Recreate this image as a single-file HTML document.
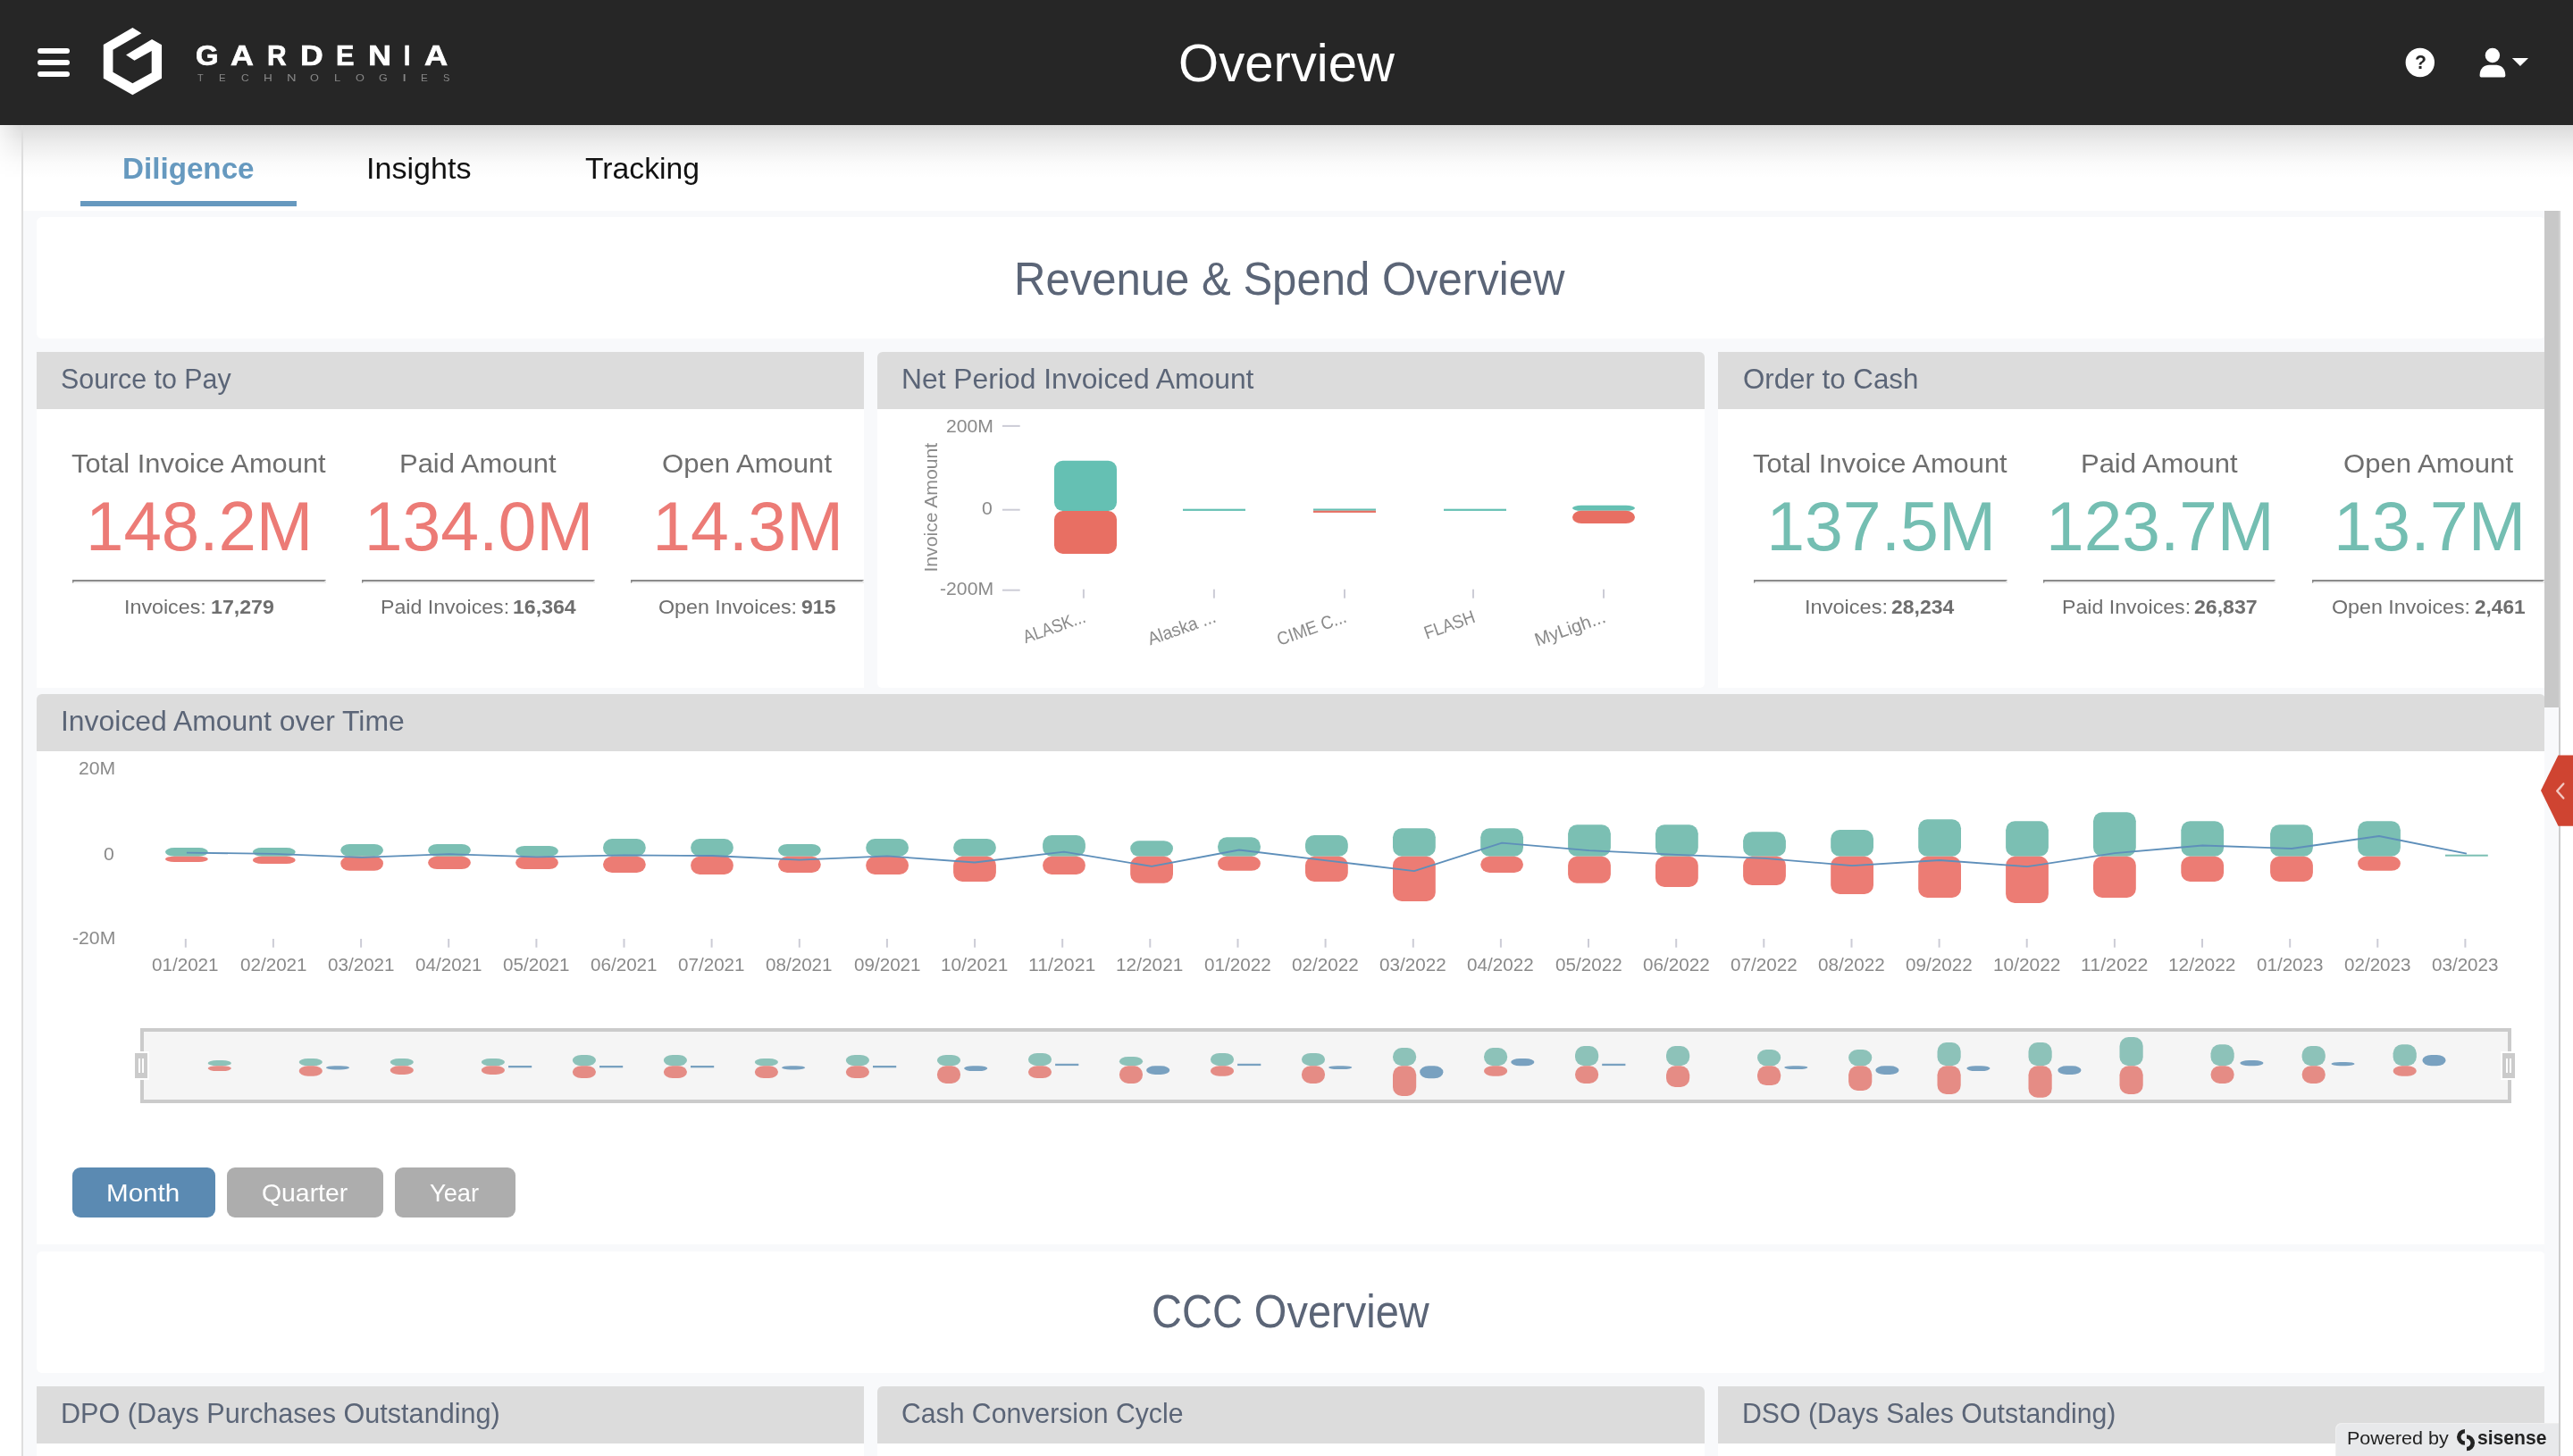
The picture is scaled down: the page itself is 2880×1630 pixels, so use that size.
<!DOCTYPE html>
<html lang="en"><head><meta charset="utf-8"><title>Overview</title>
<style>
html,body{margin:0;padding:0}
body{will-change:transform;width:2880px;height:1630px;position:relative;overflow:hidden;background:#fff;font-family:"Liberation Sans",sans-serif}
.t{position:absolute;white-space:nowrap;line-height:1;transform-origin:0 0;display:block}
.abs{position:absolute}
.bg{position:absolute;left:26px;top:236px;width:2838px;height:1394px;background:#f8f9fb}
.card{position:absolute;background:#fff;border-radius:6px}
.ph{position:absolute;background:#dcdcdc;border-radius:6px 6px 0 0}
.pb{position:absolute;background:#fff;border-radius:0 0 5px 5px}
.hr{position:absolute;box-sizing:border-box;height:4px;border-style:solid;border-width:2px;border-color:#8b8b8b #eee #eee #8b8b8b}
.btn{position:absolute;border-radius:9px;height:56px;top:1307px}
svg{position:absolute;left:0;top:0;overflow:visible}
</style></head><body>

<div class="bg"></div>
<div class="abs" style="left:0;top:140px;width:2880px;height:96px;background:#fff"></div>
<div class="abs" style="left:26px;top:140px;width:2854px;height:60px;background:linear-gradient(to bottom,rgba(0,0,0,.145),rgba(0,0,0,.07) 35%,rgba(0,0,0,.02) 70%,rgba(0,0,0,0))"></div>
<div class="abs" style="left:0;top:140px;width:24px;height:60px;background:linear-gradient(to bottom,rgba(0,0,0,.145),rgba(0,0,0,.07) 35%,rgba(0,0,0,.02) 70%,rgba(0,0,0,0));-webkit-mask-image:linear-gradient(to right,rgba(0,0,0,.35),#000);mask-image:linear-gradient(to right,rgba(0,0,0,.35),#000)"></div>
<div class="abs" style="left:24px;top:140px;width:2px;height:1490px;background:#dedede"></div>
<div class="abs" style="left:0;top:0;width:2880px;height:140px;background:#262626"></div>
<div class="abs" style="left:42px;top:54px;width:36px;height:6px;border-radius:3px;background:#fff"></div>
<div class="abs" style="left:42px;top:67px;width:36px;height:6px;border-radius:3px;background:#fff"></div>
<div class="abs" style="left:42px;top:80px;width:36px;height:6px;border-radius:3px;background:#fff"></div>
<svg width="2880" height="140" viewBox="0 0 2880 140"><path fill="#fff" d="M148.42 30.99L158.38 37.17L126.44 55.71L126.44 80.78L148.42 93.15L169.71 81.47L169.71 57.09L150.48 67.73L141.07 61.55L170.05 44.04L181.04 50.22L181.04 87.65L148.42 106.2L115.8 87.65L115.8 49.88Z"/>
<circle cx="2708.8" cy="70" r="16.2" fill="#fff"/>
<circle cx="2789.9" cy="62" r="8.2" fill="#fff"/>
<path fill="#fff" d="M2777.2 86.4 Q2775.6 86.4 2775.6 84.8 L2775.6 84 C2775.6 76.5 2781 72.7 2786 72.7 L2794 72.7 C2799 72.7 2804.3 76.5 2804.3 84 L2804.3 84.8 Q2804.3 86.4 2802.7 86.4 Z"/>
<path fill="#fff" d="M2811.9 65 L2830 65 L2820.95 74.1 Z"/>
</svg>
<span class="t" style="left:2702.65px;top:58.97px;font-size:22px;color:#262626;font-weight:bold;transform:scaleX(0.9626);">?</span>
<span class="t" style="-webkit-text-stroke:0.7px #fff;left:218.68px;top:46.24px;font-size:32.2px;color:#fff;font-weight:bold;transform:scaleX(1.0214);">G</span>
<span class="t" style="-webkit-text-stroke:0.7px #fff;left:257.90px;top:46.24px;font-size:32.2px;color:#fff;font-weight:bold;transform:scaleX(1.1125);">A</span>
<span class="t" style="-webkit-text-stroke:0.7px #fff;left:298.86px;top:46.24px;font-size:32.2px;color:#fff;font-weight:bold;transform:scaleX(0.9292);">R</span>
<span class="t" style="-webkit-text-stroke:0.7px #fff;left:336.39px;top:46.24px;font-size:32.2px;color:#fff;font-weight:bold;transform:scaleX(1.1059);">D</span>
<span class="t" style="-webkit-text-stroke:0.7px #fff;left:375.71px;top:46.24px;font-size:32.2px;color:#fff;font-weight:bold;transform:scaleX(0.9509);">E</span>
<span class="t" style="-webkit-text-stroke:0.7px #fff;left:411.55px;top:46.24px;font-size:32.2px;color:#fff;font-weight:bold;transform:scaleX(1.1212);">N</span>
<span class="t" style="-webkit-text-stroke:0.7px #fff;left:452.40px;top:46.24px;font-size:32.2px;color:#fff;font-weight:bold;transform:scaleX(0.8139);">I</span>
<span class="t" style="-webkit-text-stroke:0.7px #fff;left:475.29px;top:46.24px;font-size:32.2px;color:#fff;font-weight:bold;transform:scaleX(1.1264);">A</span>
<span class="t" style="left:221.08px;top:81.62px;font-size:11.2px;color:#878787;transform:scaleX(0.9712);">T</span>
<span class="t" style="left:245.49px;top:81.62px;font-size:11.2px;color:#878787;transform:scaleX(1.0157);">E</span>
<span class="t" style="left:270.00px;top:81.62px;font-size:11.2px;color:#878787;transform:scaleX(1.0686);">C</span>
<span class="t" style="left:295.21px;top:81.62px;font-size:11.2px;color:#878787;transform:scaleX(1.2117);">H</span>
<span class="t" style="left:320.73px;top:81.62px;font-size:11.2px;color:#878787;transform:scaleX(1.3074);">N</span>
<span class="t" style="left:347.03px;top:81.62px;font-size:11.2px;color:#878787;transform:scaleX(1.1340);">O</span>
<span class="t" style="left:373.96px;top:81.62px;font-size:11.2px;color:#878787;transform:scaleX(1.1637);">L</span>
<span class="t" style="left:398.33px;top:81.62px;font-size:11.2px;color:#878787;transform:scaleX(1.1340);">O</span>
<span class="t" style="left:424.47px;top:81.62px;font-size:11.2px;color:#878787;transform:scaleX(1.1178);">G</span>
<span class="t" style="left:450.19px;top:81.62px;font-size:11.2px;color:#878787;transform:scaleX(1.6917);">I</span>
<span class="t" style="left:470.86px;top:81.62px;font-size:11.2px;color:#878787;transform:scaleX(1.0485);">E</span>
<span class="t" style="left:496.30px;top:81.62px;font-size:11.2px;color:#878787;transform:scaleX(0.9938);">S</span>
<span class="t" style="left:1318.99px;top:40.94px;font-size:59.6px;color:#fff;transform:scaleX(0.9738);">Overview</span>
<span class="t" style="left:136.84px;top:172.80px;font-size:32.6px;color:#6699bf;font-weight:bold;transform:scaleX(1.0187);">Diligence</span>
<span class="t" style="left:410.23px;top:172.80px;font-size:32.6px;color:#111;transform:scaleX(1.0459);">Insights</span>
<span class="t" style="left:655.33px;top:172.80px;font-size:32.6px;color:#111;transform:scaleX(1.0352);">Tracking</span>
<div class="abs" style="left:90px;top:225px;width:242px;height:6px;background:#6699bf"></div>
<div class="card" style="left:41px;top:243px;width:2808px;height:136px"></div>
<span class="t" style="left:1135.47px;top:287.35px;font-size:51.2px;color:#5b6577;transform:scaleX(0.9585);">Revenue &amp; Spend Overview</span>
<div class="card" style="left:41px;top:1401px;width:2808px;height:136px"></div>
<span class="t" style="left:1289.05px;top:1443.45px;font-size:51.2px;color:#5b6577;transform:scaleX(0.9181);">CCC Overview</span>
<div class="ph" style="left:41px;top:394px;width:926px;height:64px;border-radius:0"></div>
<div class="pb" style="left:41px;top:458px;width:926px;height:312px;border-radius:0"></div>
<div class="ph" style="left:41px;top:1552px;width:926px;height:64px;border-radius:0"></div>
<div class="pb" style="left:41px;top:1616px;width:926px;height:100px;border-radius:0"></div>
<div class="ph" style="left:982px;top:394px;width:926px;height:64px"></div>
<div class="pb" style="left:982px;top:458px;width:926px;height:312px"></div>
<div class="ph" style="left:982px;top:1552px;width:926px;height:64px"></div>
<div class="pb" style="left:982px;top:1616px;width:926px;height:100px"></div>
<div class="ph" style="left:1923px;top:394px;width:926px;height:64px;border-radius:0"></div>
<div class="pb" style="left:1923px;top:458px;width:926px;height:312px;border-radius:0"></div>
<div class="ph" style="left:1923px;top:1552px;width:926px;height:64px;border-radius:0"></div>
<div class="pb" style="left:1923px;top:1616px;width:926px;height:100px;border-radius:0"></div>
<div class="ph" style="left:41px;top:777px;width:2808px;height:64px"></div>
<div class="pb" style="left:41px;top:841px;width:2808px;height:552px;border-radius:0"></div>
<span class="t" style="left:68.13px;top:409.14px;font-size:31.6px;color:#5b6577;transform:scaleX(0.9608);">Source to Pay</span>
<span class="t" style="left:1009.15px;top:409.14px;font-size:31.6px;color:#5b6577;transform:scaleX(1.0072);">Net Period Invoiced Amount</span>
<span class="t" style="left:1950.79px;top:409.14px;font-size:31.6px;color:#5b6577;transform:scaleX(0.9894);">Order to Cash</span>
<span class="t" style="left:67.63px;top:792.24px;font-size:31.6px;color:#5b6577;transform:scaleX(1.0097);">Invoiced Amount over Time</span>
<span class="t" style="left:68.25px;top:1567.04px;font-size:31.6px;color:#5b6577;transform:scaleX(0.9690);">DPO (Days Purchases Outstanding)</span>
<span class="t" style="left:1009.19px;top:1567.04px;font-size:31.6px;color:#5b6577;transform:scaleX(0.9556);">Cash Conversion Cycle</span>
<span class="t" style="left:1950.08px;top:1567.04px;font-size:31.6px;color:#5b6577;transform:scaleX(0.9569);">DSO (Days Sales Outstanding)</span>
<span class="t" style="left:80.48px;top:503.16px;font-size:30.4px;color:#6e6e6e;transform:scaleX(1.0151);">Total Invoice Amount</span>
<span class="t" style="left:96.28px;top:550.80px;font-size:77px;color:#ec7b76;transform:scaleX(0.9904);">148.2M</span>
<div class="hr" style="left:81.0px;top:649px;width:284.0px"></div>
<span class="t" style="left:139.11px;top:668.70px;font-size:22.2px;color:#6e6e6e;transform:scaleX(1.0481);">Invoices:</span>
<span class="t" style="left:235.81px;top:668.70px;font-size:22.2px;color:#6e6e6e;font-weight:bold;transform:scaleX(1.0437);">17,279</span>
<span class="t" style="left:447.12px;top:503.16px;font-size:30.4px;color:#6e6e6e;transform:scaleX(1.0184);">Paid Amount</span>
<span class="t" style="left:407.63px;top:550.80px;font-size:77px;color:#ec7b76;">134.0M</span>
<div class="hr" style="left:405.4px;top:649px;width:260.2px"></div>
<span class="t" style="left:425.65px;top:668.70px;font-size:22.2px;color:#6e6e6e;transform:scaleX(1.0430);">Paid Invoices:</span>
<span class="t" style="left:573.91px;top:668.70px;font-size:22.2px;color:#6e6e6e;font-weight:bold;transform:scaleX(1.0423);">16,364</span>
<span class="t" style="left:741.10px;top:503.16px;font-size:30.4px;color:#6e6e6e;transform:scaleX(1.0224);">Open Amount</span>
<span class="t" style="left:730.22px;top:550.80px;font-size:77px;color:#ec7b76;">14.3M</span>
<div class="hr" style="left:706.3px;top:649px;width:260.7px"></div>
<span class="t" style="left:737.25px;top:668.70px;font-size:22.2px;color:#6e6e6e;transform:scaleX(1.0477);">Open Invoices:</span>
<span class="t" style="left:897.09px;top:668.70px;font-size:22.2px;color:#6e6e6e;font-weight:bold;transform:scaleX(1.0384);">915</span>
<span class="t" style="left:1962.28px;top:503.16px;font-size:30.4px;color:#6e6e6e;transform:scaleX(1.0151);">Total Invoice Amount</span>
<span class="t" style="left:1977.23px;top:550.80px;font-size:77px;color:#74beb2;">137.5M</span>
<div class="hr" style="left:1962.8px;top:649px;width:284.0px"></div>
<span class="t" style="left:2020.48px;top:668.70px;font-size:22.2px;color:#6e6e6e;transform:scaleX(1.0624);">Invoices:</span>
<span class="t" style="left:2117.40px;top:668.70px;font-size:22.2px;color:#6e6e6e;font-weight:bold;transform:scaleX(1.0351);">28,234</span>
<span class="t" style="left:2328.92px;top:503.16px;font-size:30.4px;color:#6e6e6e;transform:scaleX(1.0184);">Paid Amount</span>
<span class="t" style="left:2290.35px;top:550.80px;font-size:77px;color:#74beb2;transform:scaleX(0.9957);">123.7M</span>
<div class="hr" style="left:2287.2px;top:649px;width:260.2px"></div>
<span class="t" style="left:2307.55px;top:668.70px;font-size:22.2px;color:#6e6e6e;transform:scaleX(1.0430);">Paid Invoices:</span>
<span class="t" style="left:2455.99px;top:668.70px;font-size:22.2px;color:#6e6e6e;font-weight:bold;transform:scaleX(1.0412);">26,837</span>
<span class="t" style="left:2622.90px;top:503.16px;font-size:30.4px;color:#6e6e6e;transform:scaleX(1.0224);">Open Amount</span>
<span class="t" style="left:2612.19px;top:550.80px;font-size:77px;color:#74beb2;transform:scaleX(1.0062);">13.7M</span>
<div class="hr" style="left:2588.1px;top:649px;width:259.9px"></div>
<span class="t" style="left:2609.65px;top:668.70px;font-size:22.2px;color:#6e6e6e;transform:scaleX(1.0477);">Open Invoices:</span>
<span class="t" style="left:2769.51px;top:668.70px;font-size:22.2px;color:#6e6e6e;font-weight:bold;transform:scaleX(1.0191);">2,461</span>
<svg width="2880" height="1630" viewBox="0 0 2880 1630">
<rect x="1122" y="475.9" width="19.7" height="2" fill="#ccccd6"/>
<rect x="1122" y="569.7" width="19.7" height="2" fill="#ccccd6"/>
<rect x="1122" y="659.7" width="19.7" height="2" fill="#ccccd6"/>
<rect x="1180" y="515.7" width="70" height="56.4" rx="9.5" fill="#65c0b3"/>
<rect x="1180" y="572.1" width="70" height="47.8" rx="9.5" fill="#e86f63"/>
<rect x="1324" y="569.7" width="70" height="2.2" fill="#65c0b3"/>
<rect x="1470" y="569.5" width="70" height="2.2" fill="#65c0b3"/>
<rect x="1470" y="571.7" width="70" height="2.2" fill="#e86f63"/>
<rect x="1616" y="569.7" width="70" height="2.2" fill="#65c0b3"/>
<rect x="1760" y="565.8" width="70" height="6" rx="10" ry="3" fill="#65c0b3"/>
<rect x="1760" y="571.8" width="70" height="14.2" rx="10" ry="7.1" fill="#e86f63"/>
<rect x="1211.9" y="659.7" width="2" height="10" fill="#ccccd6"/>
<rect x="1357.9" y="659.7" width="2" height="10" fill="#ccccd6"/>
<rect x="1504.0" y="659.7" width="2" height="10" fill="#ccccd6"/>
<rect x="1648.0" y="659.7" width="2" height="10" fill="#ccccd6"/>
<rect x="1794.0" y="659.7" width="2" height="10" fill="#ccccd6"/>
<text transform="translate(1216.4,696) rotate(-19.5)" text-anchor="end" font-size="20.5" fill="#8a8a8a" textLength="72.5" lengthAdjust="spacingAndGlyphs">ALASK...</text>
<text transform="translate(1362.4,696) rotate(-19.5)" text-anchor="end" font-size="20.5" fill="#8a8a8a" textLength="79.5" lengthAdjust="spacingAndGlyphs">Alaska ...</text>
<text transform="translate(1508.5,696) rotate(-19.5)" text-anchor="end" font-size="20.5" fill="#8a8a8a" textLength="80.8" lengthAdjust="spacingAndGlyphs">CIME C...</text>
<text transform="translate(1652.5,696) rotate(-19.5)" text-anchor="end" font-size="20.5" fill="#8a8a8a" textLength="58.8" lengthAdjust="spacingAndGlyphs">FLASH</text>
<text transform="translate(1798.5,696) rotate(-19.5)" text-anchor="end" font-size="20.5" fill="#8a8a8a" textLength="82.6" lengthAdjust="spacingAndGlyphs">MyLigh...</text>
<text transform="translate(1048.8,568.2) rotate(-90)" text-anchor="middle" font-size="20.8" fill="#8a8a8a" textLength="144.8" lengthAdjust="spacingAndGlyphs">Invoice Amount</text>
<rect x="185.0" y="949.0" width="47.8" height="9.7" rx="10" ry="10" fill="#7bbfb3"/>
<rect x="185.0" y="958.7" width="47.8" height="6.3" rx="10" ry="10" fill="#ec7c74"/>
<rect x="282.9" y="949.0" width="47.8" height="9.7" rx="10" ry="10" fill="#7bbfb3"/>
<rect x="282.9" y="958.7" width="47.8" height="8.4" rx="10" ry="10" fill="#ec7c74"/>
<rect x="381.2" y="945.0" width="47.8" height="13.7" rx="10" ry="10" fill="#7bbfb3"/>
<rect x="381.2" y="958.7" width="47.8" height="16.1" rx="10" ry="10" fill="#ec7c74"/>
<rect x="479.1" y="945.0" width="47.8" height="13.7" rx="10" ry="10" fill="#7bbfb3"/>
<rect x="479.1" y="958.7" width="47.8" height="14.3" rx="10" ry="10" fill="#ec7c74"/>
<rect x="577.1" y="946.9" width="47.8" height="11.8" rx="10" ry="10" fill="#7bbfb3"/>
<rect x="577.1" y="958.7" width="47.8" height="14.3" rx="10" ry="10" fill="#ec7c74"/>
<rect x="675.0" y="939.1" width="47.8" height="19.6" rx="10" ry="10" fill="#7bbfb3"/>
<rect x="675.0" y="958.7" width="47.8" height="18.3" rx="10" ry="10" fill="#ec7c74"/>
<rect x="773.1" y="939.1" width="47.8" height="19.6" rx="10" ry="10" fill="#7bbfb3"/>
<rect x="773.1" y="958.7" width="47.8" height="20.2" rx="10" ry="10" fill="#ec7c74"/>
<rect x="871.0" y="945.0" width="47.8" height="13.7" rx="10" ry="10" fill="#7bbfb3"/>
<rect x="871.0" y="958.7" width="47.8" height="18.3" rx="10" ry="10" fill="#ec7c74"/>
<rect x="969.2" y="939.1" width="47.8" height="19.6" rx="10" ry="10" fill="#7bbfb3"/>
<rect x="969.2" y="958.7" width="47.8" height="20.2" rx="10" ry="10" fill="#ec7c74"/>
<rect x="1067.1" y="939.1" width="47.8" height="19.6" rx="10" ry="10" fill="#7bbfb3"/>
<rect x="1067.1" y="958.7" width="47.8" height="28.3" rx="10" ry="10" fill="#ec7c74"/>
<rect x="1167.1" y="935.0" width="47.8" height="23.7" rx="10" ry="10" fill="#7bbfb3"/>
<rect x="1167.1" y="958.7" width="47.8" height="20.2" rx="10" ry="10" fill="#ec7c74"/>
<rect x="1265.2" y="941.3" width="47.8" height="17.4" rx="10" ry="10" fill="#7bbfb3"/>
<rect x="1265.2" y="958.7" width="47.8" height="30.1" rx="10" ry="10" fill="#ec7c74"/>
<rect x="1363.1" y="937.2" width="47.8" height="21.5" rx="10" ry="10" fill="#7bbfb3"/>
<rect x="1363.1" y="958.7" width="47.8" height="16.1" rx="10" ry="10" fill="#ec7c74"/>
<rect x="1461.0" y="935.0" width="47.8" height="23.7" rx="10" ry="10" fill="#7bbfb3"/>
<rect x="1461.0" y="958.7" width="47.8" height="28.3" rx="10" ry="10" fill="#ec7c74"/>
<rect x="1559.0" y="927.3" width="47.8" height="31.4" rx="10" ry="10" fill="#7bbfb3"/>
<rect x="1559.0" y="958.7" width="47.8" height="50.3" rx="10" ry="10" fill="#ec7c74"/>
<rect x="1657.2" y="927.3" width="47.8" height="31.4" rx="10" ry="10" fill="#7bbfb3"/>
<rect x="1657.2" y="958.7" width="47.8" height="18.3" rx="10" ry="10" fill="#ec7c74"/>
<rect x="1755.1" y="923.2" width="47.8" height="35.5" rx="10" ry="10" fill="#7bbfb3"/>
<rect x="1755.1" y="958.7" width="47.8" height="30.1" rx="10" ry="10" fill="#ec7c74"/>
<rect x="1853.0" y="923.2" width="47.8" height="35.5" rx="10" ry="10" fill="#7bbfb3"/>
<rect x="1853.0" y="958.7" width="47.8" height="34.2" rx="10" ry="10" fill="#ec7c74"/>
<rect x="1951.1" y="931.3" width="47.8" height="27.4" rx="10" ry="10" fill="#7bbfb3"/>
<rect x="1951.1" y="958.7" width="47.8" height="32.3" rx="10" ry="10" fill="#ec7c74"/>
<rect x="2049.2" y="929.1" width="47.8" height="29.6" rx="10" ry="10" fill="#7bbfb3"/>
<rect x="2049.2" y="958.7" width="47.8" height="42.3" rx="10" ry="10" fill="#ec7c74"/>
<rect x="2147.2" y="917.3" width="47.8" height="41.4" rx="10" ry="10" fill="#7bbfb3"/>
<rect x="2147.2" y="958.7" width="47.8" height="46.3" rx="10" ry="10" fill="#ec7c74"/>
<rect x="2245.1" y="919.2" width="47.8" height="39.5" rx="10" ry="10" fill="#7bbfb3"/>
<rect x="2245.1" y="958.7" width="47.8" height="52.2" rx="10" ry="10" fill="#ec7c74"/>
<rect x="2343.0" y="909.2" width="47.8" height="49.5" rx="10" ry="10" fill="#7bbfb3"/>
<rect x="2343.0" y="958.7" width="47.8" height="46.3" rx="10" ry="10" fill="#ec7c74"/>
<rect x="2441.3" y="919.2" width="47.8" height="39.5" rx="10" ry="10" fill="#7bbfb3"/>
<rect x="2441.3" y="958.7" width="47.8" height="28.3" rx="10" ry="10" fill="#ec7c74"/>
<rect x="2541.1" y="923.2" width="47.8" height="35.5" rx="10" ry="10" fill="#7bbfb3"/>
<rect x="2541.1" y="958.7" width="47.8" height="28.3" rx="10" ry="10" fill="#ec7c74"/>
<rect x="2639.1" y="919.2" width="47.8" height="39.5" rx="10" ry="10" fill="#7bbfb3"/>
<rect x="2639.1" y="958.7" width="47.8" height="16.1" rx="10" ry="10" fill="#ec7c74"/>
<rect x="2737.0" y="956.7" width="47.8" height="2" fill="#7bbfb3"/>
<polyline points="208.9,954.6 306.8,955.9 405.1,959.9 503.0,956.2 601.0,959.3 698.9,957.4 797.0,958.0 894.9,962.7 993.1,958.4 1091.0,965.5 1191.0,953.7 1289.1,969.9 1387.0,951.5 1485.0,963.3 1582.9,975.1 1681.1,943.7 1779.0,952.1 1876.9,956.8 1975.0,960.8 2073.1,969.2 2171.1,963.0 2269.0,970.2 2366.9,955.2 2465.2,946.5 2565.0,950.0 2663.0,936.0 2760.9,955.6" fill="none" stroke="#5e8fba" stroke-width="1.8" stroke-linejoin="round"/>
<rect x="206.8" y="1051" width="2" height="9.7" fill="#ccccd6"/>
<rect x="304.9" y="1051" width="2" height="9.7" fill="#ccccd6"/>
<rect x="403.1" y="1051" width="2" height="9.7" fill="#ccccd6"/>
<rect x="501.2" y="1051" width="2" height="9.7" fill="#ccccd6"/>
<rect x="599.4" y="1051" width="2" height="9.7" fill="#ccccd6"/>
<rect x="697.5" y="1051" width="2" height="9.7" fill="#ccccd6"/>
<rect x="795.6" y="1051" width="2" height="9.7" fill="#ccccd6"/>
<rect x="893.8" y="1051" width="2" height="9.7" fill="#ccccd6"/>
<rect x="991.9" y="1051" width="2" height="9.7" fill="#ccccd6"/>
<rect x="1090.1" y="1051" width="2" height="9.7" fill="#ccccd6"/>
<rect x="1188.2" y="1051" width="2" height="9.7" fill="#ccccd6"/>
<rect x="1286.3" y="1051" width="2" height="9.7" fill="#ccccd6"/>
<rect x="1384.5" y="1051" width="2" height="9.7" fill="#ccccd6"/>
<rect x="1482.6" y="1051" width="2" height="9.7" fill="#ccccd6"/>
<rect x="1580.8" y="1051" width="2" height="9.7" fill="#ccccd6"/>
<rect x="1678.9" y="1051" width="2" height="9.7" fill="#ccccd6"/>
<rect x="1777.0" y="1051" width="2" height="9.7" fill="#ccccd6"/>
<rect x="1875.2" y="1051" width="2" height="9.7" fill="#ccccd6"/>
<rect x="1973.3" y="1051" width="2" height="9.7" fill="#ccccd6"/>
<rect x="2071.5" y="1051" width="2" height="9.7" fill="#ccccd6"/>
<rect x="2169.6" y="1051" width="2" height="9.7" fill="#ccccd6"/>
<rect x="2267.7" y="1051" width="2" height="9.7" fill="#ccccd6"/>
<rect x="2365.9" y="1051" width="2" height="9.7" fill="#ccccd6"/>
<rect x="2464.0" y="1051" width="2" height="9.7" fill="#ccccd6"/>
<rect x="2562.2" y="1051" width="2" height="9.7" fill="#ccccd6"/>
<rect x="2660.3" y="1051" width="2" height="9.7" fill="#ccccd6"/>
<rect x="2758.4" y="1051" width="2" height="9.7" fill="#ccccd6"/>
<rect x="159" y="1153" width="2650" height="80" fill="#f5f5f5" stroke="#cbcbcb" stroke-width="4"/>
<rect x="232.7" y="1187.1" width="26.2" height="6.1" rx="10" ry="10" fill="#8dc2b9"/>
<rect x="232.7" y="1193.2" width="26.2" height="5.8" rx="10" ry="10" fill="#e58c85"/>
<rect x="334.7" y="1185.0" width="26.2" height="8.2" rx="10" ry="10" fill="#8dc2b9"/>
<rect x="334.7" y="1193.2" width="26.2" height="11.6" rx="10" ry="10" fill="#e58c85"/>
<rect x="364.9" y="1193.2" width="26.2" height="4.2" rx="10" ry="10" fill="#79a1c0"/>
<rect x="436.7" y="1185.0" width="26.2" height="8.2" rx="10" ry="10" fill="#8dc2b9"/>
<rect x="436.7" y="1193.2" width="26.2" height="9.8" rx="10" ry="10" fill="#e58c85"/>
<rect x="538.8" y="1185.0" width="26.2" height="8.2" rx="10" ry="10" fill="#8dc2b9"/>
<rect x="538.8" y="1193.2" width="26.2" height="9.8" rx="10" ry="10" fill="#e58c85"/>
<rect x="569.0" y="1193.0" width="26.2" height="2.3" fill="#79a1c0"/>
<rect x="640.8" y="1181.0" width="26.2" height="12.2" rx="10" ry="10" fill="#8dc2b9"/>
<rect x="640.8" y="1193.2" width="26.2" height="13.7" rx="10" ry="10" fill="#e58c85"/>
<rect x="671.0" y="1193.0" width="26.2" height="2.3" fill="#79a1c0"/>
<rect x="742.8" y="1181.0" width="26.2" height="12.2" rx="10" ry="10" fill="#8dc2b9"/>
<rect x="742.8" y="1193.2" width="26.2" height="13.7" rx="10" ry="10" fill="#e58c85"/>
<rect x="773.0" y="1193.0" width="26.2" height="2.3" fill="#79a1c0"/>
<rect x="844.8" y="1185.0" width="26.2" height="8.2" rx="10" ry="10" fill="#8dc2b9"/>
<rect x="844.8" y="1193.2" width="26.2" height="13.7" rx="10" ry="10" fill="#e58c85"/>
<rect x="875.0" y="1193.2" width="26.2" height="4.2" rx="10" ry="10" fill="#79a1c0"/>
<rect x="946.8" y="1181.0" width="26.2" height="12.2" rx="10" ry="10" fill="#8dc2b9"/>
<rect x="946.8" y="1193.2" width="26.2" height="13.7" rx="10" ry="10" fill="#e58c85"/>
<rect x="977.0" y="1193.0" width="26.2" height="2.3" fill="#79a1c0"/>
<rect x="1048.9" y="1181.0" width="26.2" height="12.2" rx="10" ry="10" fill="#8dc2b9"/>
<rect x="1048.9" y="1193.2" width="26.2" height="19.8" rx="10" ry="10" fill="#e58c85"/>
<rect x="1079.1" y="1193.2" width="26.2" height="5.8" rx="10" ry="10" fill="#79a1c0"/>
<rect x="1150.9" y="1179.0" width="26.2" height="14.2" rx="10" ry="10" fill="#8dc2b9"/>
<rect x="1150.9" y="1193.2" width="26.2" height="13.7" rx="10" ry="10" fill="#e58c85"/>
<rect x="1181.1" y="1190.8" width="26.2" height="2.3" fill="#79a1c0"/>
<rect x="1252.9" y="1183.1" width="26.2" height="10.1" rx="10" ry="10" fill="#8dc2b9"/>
<rect x="1252.9" y="1193.2" width="26.2" height="19.8" rx="10" ry="10" fill="#e58c85"/>
<rect x="1283.1" y="1193.2" width="26.2" height="9.8" rx="10" ry="10" fill="#79a1c0"/>
<rect x="1354.9" y="1179.0" width="26.2" height="14.2" rx="10" ry="10" fill="#8dc2b9"/>
<rect x="1354.9" y="1193.2" width="26.2" height="11.6" rx="10" ry="10" fill="#e58c85"/>
<rect x="1385.1" y="1190.8" width="26.2" height="2.3" fill="#79a1c0"/>
<rect x="1456.9" y="1179.0" width="26.2" height="14.2" rx="10" ry="10" fill="#8dc2b9"/>
<rect x="1456.9" y="1193.2" width="26.2" height="19.8" rx="10" ry="10" fill="#e58c85"/>
<rect x="1487.1" y="1193.2" width="26.2" height="3.8" rx="10" ry="10" fill="#79a1c0"/>
<rect x="1559.0" y="1173.1" width="26.2" height="20.1" rx="10" ry="10" fill="#8dc2b9"/>
<rect x="1559.0" y="1193.2" width="26.2" height="33.8" rx="10" ry="10" fill="#e58c85"/>
<rect x="1589.2" y="1193.2" width="26.2" height="14.0" rx="10" ry="10" fill="#79a1c0"/>
<rect x="1661.0" y="1173.1" width="26.2" height="20.1" rx="10" ry="10" fill="#8dc2b9"/>
<rect x="1661.0" y="1193.2" width="26.2" height="11.6" rx="10" ry="10" fill="#e58c85"/>
<rect x="1691.2" y="1185.0" width="26.2" height="8.2" rx="10" ry="10" fill="#79a1c0"/>
<rect x="1763.0" y="1171.0" width="26.2" height="22.2" rx="10" ry="10" fill="#8dc2b9"/>
<rect x="1763.0" y="1193.2" width="26.2" height="19.8" rx="10" ry="10" fill="#e58c85"/>
<rect x="1793.2" y="1190.8" width="26.2" height="2.3" fill="#79a1c0"/>
<rect x="1865.0" y="1171.0" width="26.2" height="22.2" rx="10" ry="10" fill="#8dc2b9"/>
<rect x="1865.0" y="1193.2" width="26.2" height="23.8" rx="10" ry="10" fill="#e58c85"/>
<rect x="1967.0" y="1175.0" width="26.2" height="18.2" rx="10" ry="10" fill="#8dc2b9"/>
<rect x="1967.0" y="1193.2" width="26.2" height="21.9" rx="10" ry="10" fill="#e58c85"/>
<rect x="1997.2" y="1193.2" width="26.2" height="3.8" rx="10" ry="10" fill="#79a1c0"/>
<rect x="2069.1" y="1175.0" width="26.2" height="18.2" rx="10" ry="10" fill="#8dc2b9"/>
<rect x="2069.1" y="1193.2" width="26.2" height="27.7" rx="10" ry="10" fill="#e58c85"/>
<rect x="2099.3" y="1193.2" width="26.2" height="9.8" rx="10" ry="10" fill="#79a1c0"/>
<rect x="2168.5" y="1167.1" width="26.2" height="26.1" rx="10" ry="10" fill="#8dc2b9"/>
<rect x="2168.5" y="1193.2" width="26.2" height="31.7" rx="10" ry="10" fill="#e58c85"/>
<rect x="2201.3" y="1193.2" width="26.2" height="5.8" rx="10" ry="10" fill="#79a1c0"/>
<rect x="2270.5" y="1167.1" width="26.2" height="26.1" rx="10" ry="10" fill="#8dc2b9"/>
<rect x="2270.5" y="1193.2" width="26.2" height="35.6" rx="10" ry="10" fill="#e58c85"/>
<rect x="2303.3" y="1193.2" width="26.2" height="9.8" rx="10" ry="10" fill="#79a1c0"/>
<rect x="2372.5" y="1161.0" width="26.2" height="32.2" rx="10" ry="10" fill="#8dc2b9"/>
<rect x="2372.5" y="1193.2" width="26.2" height="31.7" rx="10" ry="10" fill="#e58c85"/>
<rect x="2474.5" y="1169.2" width="26.2" height="24.0" rx="10" ry="10" fill="#8dc2b9"/>
<rect x="2474.5" y="1193.2" width="26.2" height="19.8" rx="10" ry="10" fill="#e58c85"/>
<rect x="2507.3" y="1187.0" width="26.2" height="6.2" rx="10" ry="10" fill="#79a1c0"/>
<rect x="2576.6" y="1171.0" width="26.2" height="22.2" rx="10" ry="10" fill="#8dc2b9"/>
<rect x="2576.6" y="1193.2" width="26.2" height="19.8" rx="10" ry="10" fill="#e58c85"/>
<rect x="2609.4" y="1189.0" width="26.2" height="4.2" rx="10" ry="10" fill="#79a1c0"/>
<rect x="2678.6" y="1169.2" width="26.2" height="24.0" rx="10" ry="10" fill="#8dc2b9"/>
<rect x="2678.6" y="1193.2" width="26.2" height="11.6" rx="10" ry="10" fill="#e58c85"/>
<rect x="2711.4" y="1181.0" width="26.2" height="12.2" rx="10" ry="10" fill="#79a1c0"/>
<rect x="149" y="1177" width="18" height="32" fill="#fff"/>
<rect x="151" y="1179" width="14" height="28" fill="#cbcbcb"/>
<rect x="155" y="1185" width="2" height="16" fill="#fff"/>
<rect x="159" y="1185" width="2" height="16" fill="#fff"/>
<rect x="2799" y="1177" width="18" height="32" fill="#fff"/>
<rect x="2801" y="1179" width="14" height="28" fill="#cbcbcb"/>
<rect x="2805" y="1185" width="2" height="16" fill="#fff"/>
<rect x="2809" y="1185" width="2" height="16" fill="#fff"/>
</svg>
<span class="t" style="left:1059.17px;top:466.80px;font-size:20.2px;color:#8a8a8a;transform:scaleX(1.0500);">200M</span>
<span class="t" style="left:1099.47px;top:558.80px;font-size:20.2px;color:#8a8a8a;transform:scaleX(1.0500);">0</span>
<span class="t" style="left:1052.17px;top:648.60px;font-size:20.2px;color:#8a8a8a;transform:scaleX(1.0500);">-200M</span>
<span class="t" style="left:88.05px;top:849.80px;font-size:20.2px;color:#8a8a8a;transform:scaleX(1.0500);">20M</span>
<span class="t" style="left:116.47px;top:945.50px;font-size:20.2px;color:#8a8a8a;transform:scaleX(1.0500);">0</span>
<span class="t" style="left:80.94px;top:1039.70px;font-size:20.2px;color:#8a8a8a;transform:scaleX(1.0500);">-20M</span>
<span class="t" style="left:170.38px;top:1069.87px;font-size:20px;color:#8a8a8a;transform:scaleX(1.0312);">01/2021</span>
<span class="t" style="left:268.52px;top:1069.87px;font-size:20px;color:#8a8a8a;transform:scaleX(1.0312);">02/2021</span>
<span class="t" style="left:366.66px;top:1069.87px;font-size:20px;color:#8a8a8a;transform:scaleX(1.0312);">03/2021</span>
<span class="t" style="left:464.80px;top:1069.87px;font-size:20px;color:#8a8a8a;transform:scaleX(1.0312);">04/2021</span>
<span class="t" style="left:562.94px;top:1069.87px;font-size:20px;color:#8a8a8a;transform:scaleX(1.0312);">05/2021</span>
<span class="t" style="left:661.08px;top:1069.87px;font-size:20px;color:#8a8a8a;transform:scaleX(1.0312);">06/2021</span>
<span class="t" style="left:759.22px;top:1069.87px;font-size:20px;color:#8a8a8a;transform:scaleX(1.0312);">07/2021</span>
<span class="t" style="left:857.36px;top:1069.87px;font-size:20px;color:#8a8a8a;transform:scaleX(1.0312);">08/2021</span>
<span class="t" style="left:955.50px;top:1069.87px;font-size:20px;color:#8a8a8a;transform:scaleX(1.0312);">09/2021</span>
<span class="t" style="left:1052.90px;top:1069.87px;font-size:20px;color:#8a8a8a;transform:scaleX(1.0415);">10/2021</span>
<span class="t" style="left:1151.00px;top:1069.87px;font-size:20px;color:#8a8a8a;transform:scaleX(1.0643);">11/2021</span>
<span class="t" style="left:1249.18px;top:1069.87px;font-size:20px;color:#8a8a8a;transform:scaleX(1.0415);">12/2021</span>
<span class="t" style="left:1348.05px;top:1069.87px;font-size:20px;color:#8a8a8a;transform:scaleX(1.0326);">01/2022</span>
<span class="t" style="left:1446.19px;top:1069.87px;font-size:20px;color:#8a8a8a;transform:scaleX(1.0326);">02/2022</span>
<span class="t" style="left:1544.33px;top:1069.87px;font-size:20px;color:#8a8a8a;transform:scaleX(1.0326);">03/2022</span>
<span class="t" style="left:1642.47px;top:1069.87px;font-size:20px;color:#8a8a8a;transform:scaleX(1.0326);">04/2022</span>
<span class="t" style="left:1740.61px;top:1069.87px;font-size:20px;color:#8a8a8a;transform:scaleX(1.0326);">05/2022</span>
<span class="t" style="left:1838.75px;top:1069.87px;font-size:20px;color:#8a8a8a;transform:scaleX(1.0326);">06/2022</span>
<span class="t" style="left:1936.89px;top:1069.87px;font-size:20px;color:#8a8a8a;transform:scaleX(1.0326);">07/2022</span>
<span class="t" style="left:2035.03px;top:1069.87px;font-size:20px;color:#8a8a8a;transform:scaleX(1.0326);">08/2022</span>
<span class="t" style="left:2133.17px;top:1069.87px;font-size:20px;color:#8a8a8a;transform:scaleX(1.0326);">09/2022</span>
<span class="t" style="left:2230.58px;top:1069.87px;font-size:20px;color:#8a8a8a;transform:scaleX(1.0430);">10/2022</span>
<span class="t" style="left:2328.68px;top:1069.87px;font-size:20px;color:#8a8a8a;transform:scaleX(1.0659);">11/2022</span>
<span class="t" style="left:2426.86px;top:1069.87px;font-size:20px;color:#8a8a8a;transform:scaleX(1.0430);">12/2022</span>
<span class="t" style="left:2525.74px;top:1069.87px;font-size:20px;color:#8a8a8a;transform:scaleX(1.0297);">01/2023</span>
<span class="t" style="left:2623.88px;top:1069.87px;font-size:20px;color:#8a8a8a;transform:scaleX(1.0297);">02/2023</span>
<span class="t" style="left:2722.02px;top:1069.87px;font-size:20px;color:#8a8a8a;transform:scaleX(1.0297);">03/2023</span>
<div class="btn" style="left:81px;width:160px;background:#5b8ab2"></div>
<div class="btn" style="left:254px;width:175px;background:#adadad"></div>
<div class="btn" style="left:442px;width:135px;background:#adadad"></div>
<span class="t" style="left:119.33px;top:1321.59px;font-size:28px;color:#fff;transform:scaleX(1.0572);">Month</span>
<span class="t" style="left:293.02px;top:1321.59px;font-size:28px;color:#fff;transform:scaleX(1.0140);">Quarter</span>
<span class="t" style="left:481.32px;top:1321.59px;font-size:28px;color:#fff;transform:scaleX(0.9722);">Year</span>
<div class="abs" style="left:2848px;top:236px;width:16px;height:1394px;background:#f8f9fb"></div>
<div class="abs" style="left:2848px;top:236px;width:16px;height:556px;background:#c8c8c8"></div>
<div class="abs" style="left:2864px;top:236px;width:2px;height:1394px;background:#cdcdcd"></div>
<div class="abs" style="left:2864px;top:236px;width:2px;height:556px;background:#d3d3d3"></div>
<div class="abs" style="left:2866px;top:236px;width:14px;height:1394px;background:#fff"></div>
<svg width="2880" height="1630" viewBox="0 0 2880 1630"><path d="M2880 845.4 L2863.5 845.4 L2844 885 L2863.5 924.7 L2880 924.7 Z" fill="#cf4431"/><path d="M2869.3 877.5 L2862.2 885.5 L2869.3 893.5" fill="none" stroke="#f3c9c2" stroke-width="2.4" stroke-linecap="round" stroke-linejoin="round"/></svg>
<div class="abs" style="left:2614px;top:1593px;width:250px;height:40px;background:#e8e9eb;border-radius:7px 0 0 0;box-shadow:inset 1px 1px 0 #efefef,inset 0 -2px 0 #e2e1e0"></div>
<span class="t" style="left:2627.48px;top:1600.16px;font-size:20.6px;color:#222;transform:scaleX(1.0465);">Powered by</span>
<span class="t" style="left:2773.16px;top:1598.97px;font-size:22px;color:#222;font-weight:bold;transform:scaleX(0.9583);">sisense</span>
<svg width="2880" height="1630" viewBox="0 0 2880 1630"><path fill="#222" d="M2758.94 1599.89 A8.95 8.95 0 0 0 2758.94 1617.79 L2758.94 1613.24 A4.4 4.4 0 0 1 2758.94 1604.44 Z"/><path fill="#222" d="M2761.04 1606.27 A9.0 9.0 0 0 1 2761.04 1624.27 L2761.04 1619.67 A4.4 4.4 0 0 0 2761.04 1610.87 Z"/></svg>
</body></html>
